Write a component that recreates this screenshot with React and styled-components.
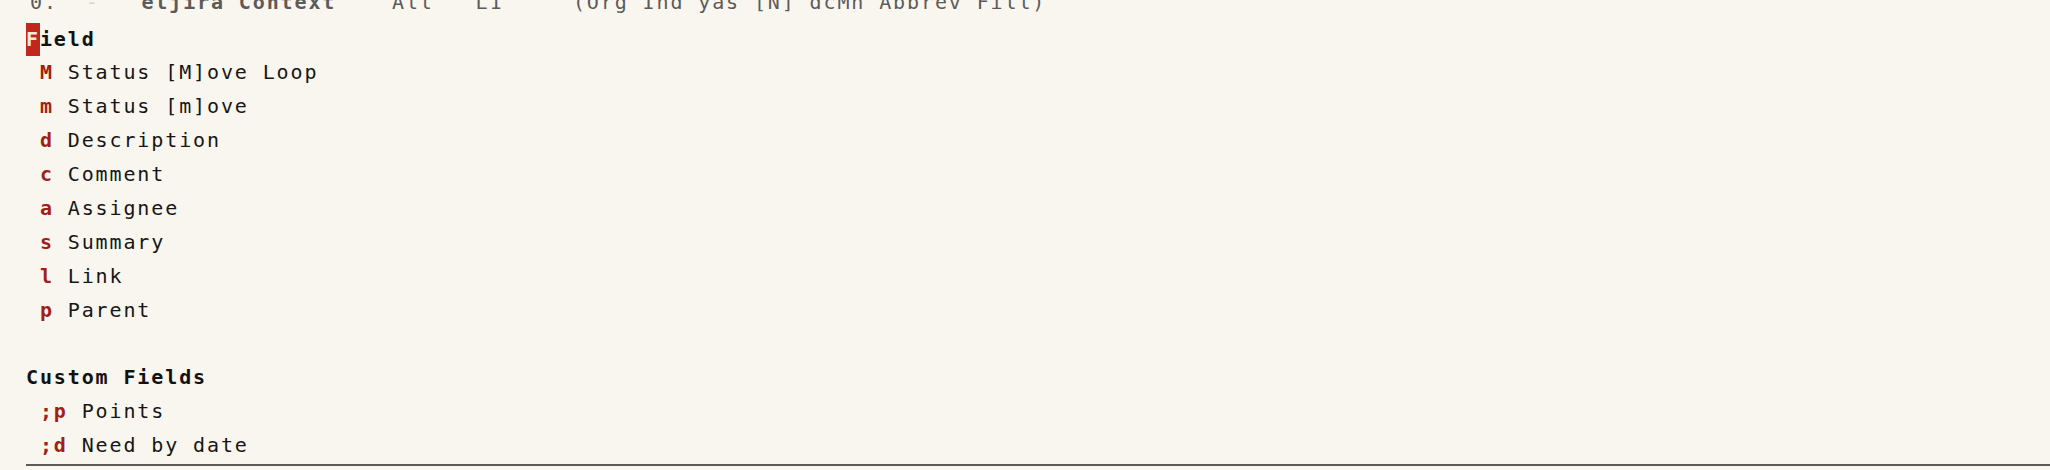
import React from "react";
import styled, { createGlobalStyle } from "styled-components";

const GlobalStyle = createGlobalStyle`
  html, body {
    margin: 0;
    padding: 0;
    background: #f9f6ef;
  }
`;

const Frame = styled.div`
  width: 2050px;
  height: 470px;
  overflow: hidden;
  background: #f9f6ef;
  font-family: "DejaVu Sans Mono", "Liberation Mono", monospace;
  font-size: 20px;
  letter-spacing: 1.88px;
  color: #161616;
  padding-left: 26px;
  box-sizing: border-box;
`;

const ModeLine = styled.div`
  height: 34px;
  line-height: 34px;
  margin-top: -15px;
  margin-bottom: 3px;
  margin-left: 4px;
  white-space: pre;
  color: #5b5b5b;
`;

const ModeBold = styled.span`
  font-weight: bold;
`;

const ModeFaint = styled.span`
  color: #d9d5cd;
`;

const Row = styled.div`
  height: 33.88px;
  line-height: 33.88px;
  white-space: pre;
  padding-top: 0.5px;
  box-sizing: border-box;
`;

const Heading = styled(Row)`
  font-weight: bold;
  color: #111;
`;

const Cursor = styled.span`
  display: inline-block;
  height: 33.88px;
  vertical-align: top;
  background: #c0281e;
  color: #f6e7e2;
`;

const Key = styled.span`
  font-weight: bold;
  color: #a11f16;
`;

const Separator = styled.div`
  margin-top: 2px;
  height: 2px;
  background: #5c5b57;
`;

const fields = [
  ["M", "Status [M]ove Loop"],
  ["m", "Status [m]ove"],
  ["d", "Description"],
  ["c", "Comment"],
  ["a", "Assignee"],
  ["s", "Summary"],
  ["l", "Link"],
  ["p", "Parent"],
];

const customFields = [
  [";p", "Points"],
  [";d", "Need by date"],
];

export default function App() {
  return (
    <>
      <GlobalStyle />
      <Frame>
        <ModeLine>
          {"0.  "}
          <ModeFaint>-</ModeFaint>
          {"   "}
          <ModeBold>eljira Context</ModeBold>
          {"    All   L1     (Org Ind yas [N] dcMh Abbrev Fill)"}
        </ModeLine>
        <Heading>
          <Cursor>F</Cursor>ield
        </Heading>
        {fields.map(([k, label]) => (
          <Row key={k}>
            {" "}
            <Key>{k}</Key> {label}
          </Row>
        ))}
        <Row> </Row>
        <Heading>Custom Fields</Heading>
        {customFields.map(([k, label]) => (
          <Row key={k}>
            {" "}
            <Key>{k}</Key> {label}
          </Row>
        ))}
        <Separator />
      </Frame>
    </>
  );
}
